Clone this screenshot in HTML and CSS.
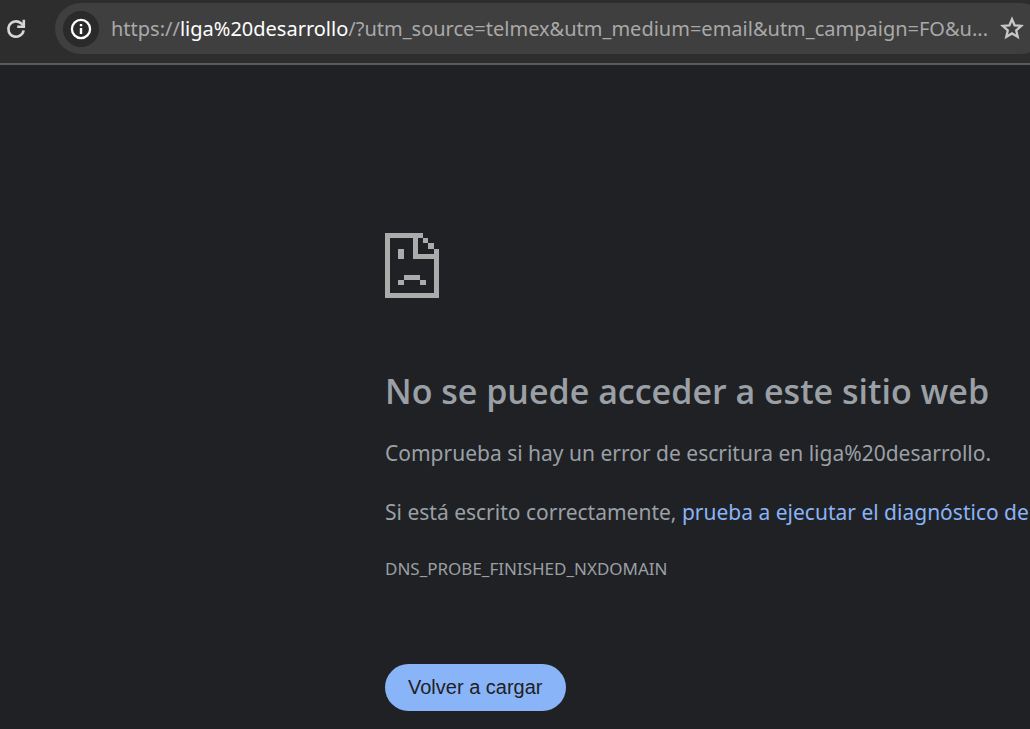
FILE: index.html
```html
<!DOCTYPE html>
<html lang="es">
<head>
<meta charset="utf-8">
<meta name="viewport" content="width=device-width, initial-scale=1">
<title>liga%20desarrollo</title>
<link rel="stylesheet" href="styles.css">
</head>
<body>
<header class="toolbar">
  <button class="icon-button reload" type="button" aria-label="Recargar">
    <svg width="22" height="22" viewBox="0 0 22 22" fill="none" stroke="currentColor" stroke-width="2.6"><path d="M18.6 12.4A7.7 7.7 0 1 1 16 5.2L18.4 7.6"/><path d="M18.8 1.8v7h-6.6"/></svg>
  </button>
  <div class="omnibox">
    <button class="icon-button site-info" type="button" aria-label="Información del sitio">
      <svg width="22" height="22" viewBox="0 0 22 22" fill="none" stroke="currentColor"><circle cx="11" cy="11" r="9.1" stroke-width="2.3"/><path d="M11 10v6M11 6v2.3" stroke-width="2.4"/></svg>
    </button>
    <div class="url" role="textbox" aria-label="Dirección" tabindex="0">https://<span class="host">liga%20desarrollo</span>/?utm_source=telmex&amp;utm_medium=email&amp;utm_campaign=FO&amp;u...</div>
    <button class="icon-button bookmark" type="button" aria-label="Añadir a marcadores">
      <svg width="26" height="26" viewBox="0 0 26 26" fill="none" stroke="currentColor" stroke-width="2.3"><path d="M13 3.2l2.6 6.1 6.6.6-5 4.4 1.5 6.5-5.7-3.4-5.7 3.4 1.5-6.5-5-4.4 6.6-.6z"/></svg>
    </button>
  </div>
</header>
<main class="error-page">
  <svg class="sad-file" width="54" height="65" viewBox="0 0 54 65" fill="currentColor" shape-rendering="crispEdges" aria-hidden="true">
    <path d="M0 0h38v5h-5v16h16v-5h5v49H0zM5 5v55h44V26H28V5z" fill-rule="evenodd"/>
    <path d="M38 5h5v5h-5zM43 10h6v6h-6zM13 16h6v10h-6zM19 42h16v5H19zM13 47h6v5h-6zM35 47h6v5h-6z"/>
  </svg>
  <h1 class="title">No se puede acceder a este sitio web</h1>
  <p class="message">Comprueba si hay un error de escritura en liga%20desarrollo.</p>
  <p class="message">Si está escrito correctamente, <a class="link" href="#">prueba a ejecutar el diagnóstico de</a></p>
  <p class="code">DNS_PROBE_FINISHED_NXDOMAIN</p>
  <button class="retry" type="button">Volver a cargar</button>
</main>
</body>
</html>
```
FILE: styles.css
```css
* {
  box-sizing: border-box;
}

body {
  margin: 0;
  min-height: 100vh;
  overflow: hidden;
  background: #202124;
  color: #9aa0a6;
  font-family: "Segoe UI", "Noto Sans", sans-serif;
}

.toolbar {
  display: flex;
  align-items: flex-start;
  gap: 28px;
  height: 65px;
  padding: 3px 0 0 5px;
  background: #2d2d2d;
  border-bottom: 2px solid #5a5a5a;
}

.icon-button {
  display: flex;
  flex: none;
  align-items: center;
  justify-content: center;
  padding: 0;
  border: 0;
  background: none;
  color: #d6d6d6;
}

.reload {
  width: 22px;
  height: 51px;
}

.omnibox {
  display: flex;
  flex: 1;
  align-items: center;
  min-width: 0;
  height: 51px;
  margin-right: -16px;
  padding: 0 21px 0 8px;
  border-radius: 26px;
  background: #3f3f3f;
}

.site-info {
  width: 36px;
  height: 36px;
  border-radius: 50%;
  background: #2a2a2a;
  color: #ffffff;
}

.url {
  flex: 1;
  min-width: 0;
  margin-left: 12px;
  overflow: hidden;
  color: #a9a9a9;
  font-size: 20px;
  line-height: 32px;
  white-space: nowrap;
}

.host {
  color: #ffffff;
}

.bookmark {
  width: 26px;
  height: 36px;
  color: #c8c8c8;
}

.error-page {
  padding: 168px 0 16px 385px;
  white-space: nowrap;
}

.sad-file {
  display: block;
  color: #ababab;
}

.title {
  margin: 68px 0 0;
  font-family: "Segoe UI", "Open Sans", sans-serif;
  font-size: 34px;
  font-weight: 600;
  line-height: 50px;
}

.message {
  margin: 19px 0 0;
  font-size: 21px;
  line-height: 36px;
}

.message + .message {
  margin-top: 23px;
}

.code {
  margin: 23px 0 0;
  font-size: 17px;
  line-height: 32px;
}

.link {
  color: #8ab4f8;
  text-decoration: none;
}

.retry {
  display: block;
  height: 47px;
  margin-top: 79px;
  padding: 0 23px;
  border: 0;
  border-radius: 24px;
  background: #8ab4f8;
  color: #202124;
  font-family: "Liberation Sans", Arial, sans-serif;
  font-size: 20px;
}
```
